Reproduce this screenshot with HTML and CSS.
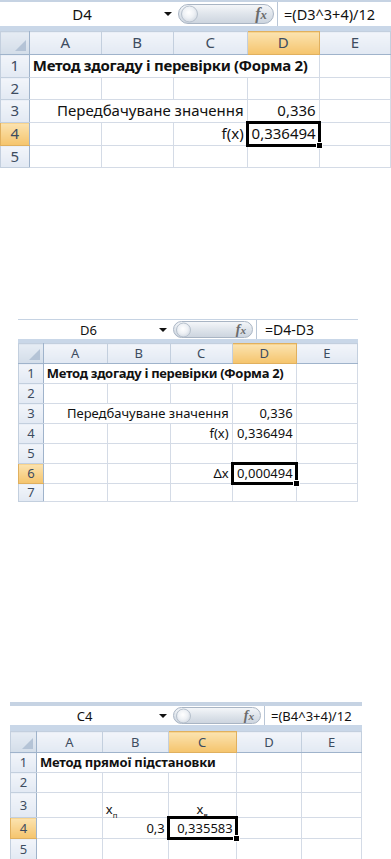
FILE: index.html
```html
<!DOCTYPE html>
<html lang="uk">
<head>
  <meta charset="UTF-8">
  <meta name="viewport" content="width=device-width, initial-scale=1.0">
  <title>Метод здогаду і перевірки</title>
  <link rel="stylesheet" href="styles.css">
</head>
<body>
  <!-- Фрагмент 1: D4 -->
  <div class="sheet sheet-one">
    <div class="formula-bar">
      <div class="name-box"><span class="ref">D4</span><span class="drop"></span></div>
      <div class="func"><span class="knob"></span><span class="fx">f<i>x</i></span></div>
      <div class="formula">=(D3^3+4)/12</div>
    </div>
    <table class="grid">
      <colgroup><col><col><col><col><col><col></colgroup>
      <tr class="head"><th class="corner"></th><th>A</th><th>B</th><th>C</th><th class="sel">D</th><th>E</th></tr>
      <tr><th>1</th><td colspan="4" class="title">Метод здогаду і перевірки (Форма 2)</td><td></td></tr>
      <tr><th>2</th><td></td><td></td><td></td><td></td><td></td></tr>
      <tr><th>3</th><td colspan="3" class="num">Передбачуване значення</td><td class="num">0,336</td><td></td></tr>
      <tr><th class="sel">4</th><td></td><td></td><td class="num">f(x)</td><td class="num active">0,336494</td><td></td></tr>
      <tr><th>5</th><td></td><td></td><td></td><td></td><td></td></tr>
    </table>
  </div>

  <!-- Фрагмент 2: D6 -->
  <div class="sheet sheet-two">
    <div class="formula-bar">
      <div class="name-box"><span class="ref">D6</span><span class="drop"></span></div>
      <div class="func"><span class="knob"></span><span class="fx">f<i>x</i></span></div>
      <div class="formula">=D4-D3</div>
    </div>
    <table class="grid">
      <colgroup><col><col><col><col><col><col></colgroup>
      <tr class="head"><th class="corner"></th><th>A</th><th>B</th><th>C</th><th class="sel">D</th><th>E</th></tr>
      <tr><th>1</th><td colspan="4" class="title">Метод здогаду і перевірки (Форма 2)</td><td></td></tr>
      <tr><th>2</th><td></td><td></td><td></td><td></td><td></td></tr>
      <tr><th>3</th><td colspan="3" class="num">Передбачуване значення</td><td class="num">0,336</td><td></td></tr>
      <tr><th>4</th><td></td><td></td><td class="num">f(x)</td><td class="num">0,336494</td><td></td></tr>
      <tr><th>5</th><td></td><td></td><td></td><td></td><td></td></tr>
      <tr><th class="sel">6</th><td></td><td></td><td class="num">Δx</td><td class="num active">0,000494</td><td></td></tr>
      <tr class="cut"><th>7</th><td></td><td></td><td></td><td></td><td></td></tr>
    </table>
  </div>

  <!-- Фрагмент 3: C4 -->
  <div class="sheet sheet-three">
    <div class="formula-bar">
      <div class="name-box"><span class="ref">C4</span><span class="drop"></span></div>
      <div class="func"><span class="knob"></span><span class="fx">f<i>x</i></span></div>
      <div class="formula">=(B4^3+4)/12</div>
    </div>
    <table class="grid">
      <colgroup><col><col><col><col><col><col></colgroup>
      <tr class="head"><th class="corner"></th><th>A</th><th>B</th><th class="sel">C</th><th>D</th><th>E</th></tr>
      <tr><th>1</th><td colspan="3" class="title">Метод прямої підстановки</td><td></td><td></td></tr>
      <tr><th>2</th><td></td><td></td><td></td><td></td><td></td></tr>
      <tr class="tall"><th>3</th><td></td><td class="var-n">x<sub>п</sub></td><td class="var-v">x<sub>в</sub></td><td></td><td></td></tr>
      <tr><th class="sel">4</th><td></td><td class="num">0,3</td><td class="num active">0,335583</td><td></td><td></td></tr>
      <tr><th>5</th><td></td><td></td><td></td><td></td><td></td></tr>
    </table>
  </div>
</body>
</html>
```

FILE: styles.css
```css
body {
  margin: 0;
  background-color: #fff;
  font-family: "Noto Sans", "DejaVu Sans", sans-serif;
  color: #111;
}
.sheet {
  overflow: hidden;
}

/* рядок формул */
.formula-bar {
  display: flex;
  background-color: #fff;
  border-top: 2px solid #c6d3e3;
  border-bottom: 5px solid #c9d7e8;
}
.name-box {
  display: flex;
  align-items: center;
  background-color: #fff;
}
.ref {
  flex: 1;
  text-align: center;
}
.drop {
  width: 0;
  height: 0;
  border-left: 4px solid transparent;
  border-right: 4px solid transparent;
  border-top: 4px solid #111;
  margin-right: 6px;
}
.func {
  display: flex;
  align-items: center;
  justify-content: flex-end;
  position: relative;
  margin: 2px 0;
  padding-right: 6px;
  border: 1px solid #a9b5c4;
  border-radius: 12px;
  background: linear-gradient(#f4f6f9, #dde3ea 55%, #cdd5df);
}
.knob {
  position: absolute;
  left: 2px;
  top: 50%;
  transform: translateY(-50%);
  border-radius: 50%;
  border: 1px solid #b7c1cd;
  background: radial-gradient(circle at 45% 40%, #fff 0, #eef1f5 45%, #c5ced9 100%);
}
.fx {
  font-family: "Liberation Serif", "DejaVu Serif", serif;
  font-style: italic;
  color: #6b6b6b;
  font-weight: bold;
}
.fx i {
  font-size: 0.8em;
}
.formula {
  flex: 1;
  display: flex;
  align-items: center;
  border-left: 1px solid #b9c6d6;
  margin-left: 3px;
}

/* сітка */
.grid {
  border-collapse: collapse;
  table-layout: fixed;
  line-height: 1.15;
}
.grid td {
  padding: 0 3px;
  border: 1px solid #d4dbe6;
  white-space: nowrap;
}
.grid th {
  padding: 0;
  font-weight: normal;
  color: #3d4c60;
  background: linear-gradient(#f2f5fa, #e2e9f3);
  border: 1px solid #c3cfde;
  text-align: center;
}
.grid .head th {
  border-bottom-color: #9fb3cb;
}
.grid tr th:first-child {
  border-right-color: #9fb3cb;
}
.grid th.sel {
  background: linear-gradient(#fbe3b0, #f5c46c);
  color: #3d4c60;
  border-color: #e0b05f;
}
.grid th.corner {
  position: relative;
  background: linear-gradient(#e6ecf4, #d3dde9);
}
.grid th.corner::after {
  content: "";
  position: absolute;
  right: 3px;
  bottom: 3px;
  border-left: 11px solid transparent;
  border-bottom: 11px solid #b4c3d6;
}
.title {
  font-weight: bold;
  letter-spacing: -0.3px;
}
.num {
  text-align: right;
}
.active {
  position: relative;
}
.active::after {
  content: "";
  position: absolute;
  inset: -2px;
  border: 3px solid #000;
}
.active::before {
  content: "";
  position: absolute;
  right: -4px;
  bottom: -4px;
  width: 5px;
  height: 5px;
  background-color: #000;
  border: 1px solid #fff;
  z-index: 1;
}
.var-n {
  padding-left: 14px;
  vertical-align: bottom;
  padding-bottom: 2px;
}
.var-v {
  text-align: center;
  vertical-align: bottom;
  padding-bottom: 2px;
}
sub {
  font-size: 0.6em;
  line-height: 0;
}

/* фрагмент 1 */
.sheet-one {
  width: 391px;
  font-size: 15px;
}
.sheet-one .formula-bar {
  height: 24px;
}
.sheet-one .name-box {
  width: 178px;
}
.sheet-one .func {
  width: 88px;
}
.sheet-one .knob {
  width: 15px;
  height: 15px;
}
.sheet-one .fx {
  font-size: 16px;
}
.sheet-one .formula {
  padding-left: 6px;
  font-size: 14.5px;
}
.sheet-one col:nth-child(1) { width: 29px; }
.sheet-one col:nth-child(2) { width: 72px; }
.sheet-one col:nth-child(3) { width: 72px; }
.sheet-one col:nth-child(4) { width: 74px; }
.sheet-one col:nth-child(5) { width: 72px; }
.sheet-one col:nth-child(6) { width: 72px; }
.sheet-one tr { height: 23px; }
.sheet-one tr:nth-child(3),
.sheet-one tr:nth-child(6) { height: 22px; }

/* фрагмент 2 */
.sheet-two {
  width: 340px;
  margin: 151px 0 0 18px;
  font-size: 13px;
}
.sheet-two .formula-bar {
  height: 19px;
  border-top-width: 1px;
  border-bottom-width: 4px;
}
.sheet-two .name-box {
  width: 155px;
}
.sheet-two .func {
  width: 72px;
  margin: 1px 0;
}
.sheet-two .knob {
  width: 13px;
  height: 13px;
}
.sheet-two .fx {
  font-size: 14px;
}
.sheet-two .formula {
  padding-left: 8px;
  font-size: 14px;
}
.sheet-two col:nth-child(1) { width: 25px; }
.sheet-two col:nth-child(2) { width: 64px; }
.sheet-two col:nth-child(3) { width: 63px; }
.sheet-two col:nth-child(4) { width: 62px; }
.sheet-two col:nth-child(5) { width: 64px; }
.sheet-two col:nth-child(6) { width: 62px; }
.sheet-two tr { height: 20px; }
.sheet-two tr.cut { height: 18px; }

/* фрагмент 3 */
.sheet-three {
  width: 352px;
  margin: 200px 0 0 10px;
  font-size: 13px;
}
.sheet-three .title {
  letter-spacing: -0.15px;
}
.sheet-three .formula-bar {
  height: 19px;
  border-top-width: 4px;
  border-bottom-width: 6px;
}
.sheet-three .name-box {
  width: 163px;
}
.sheet-three .func {
  width: 80px;
  margin: 1px 0;
}
.sheet-three .knob {
  width: 13px;
  height: 13px;
}
.sheet-three .fx {
  font-size: 14px;
}
.sheet-three .formula {
  padding-left: 6px;
  font-size: 13px;
}
.sheet-three col:nth-child(1) { width: 26px; }
.sheet-three col:nth-child(2) { width: 66px; }
.sheet-three col:nth-child(3) { width: 66px; }
.sheet-three col:nth-child(4) { width: 68px; }
.sheet-three col:nth-child(5) { width: 66px; }
.sheet-three col:nth-child(6) { width: 60px; }
.sheet-three tr { height: 20px; }
.sheet-three tr.head { height: 21px; }
.sheet-three tr.tall { height: 25px; }
.sheet-three tr:nth-child(5),
.sheet-three tr:nth-child(6) { height: 21px; }
```
